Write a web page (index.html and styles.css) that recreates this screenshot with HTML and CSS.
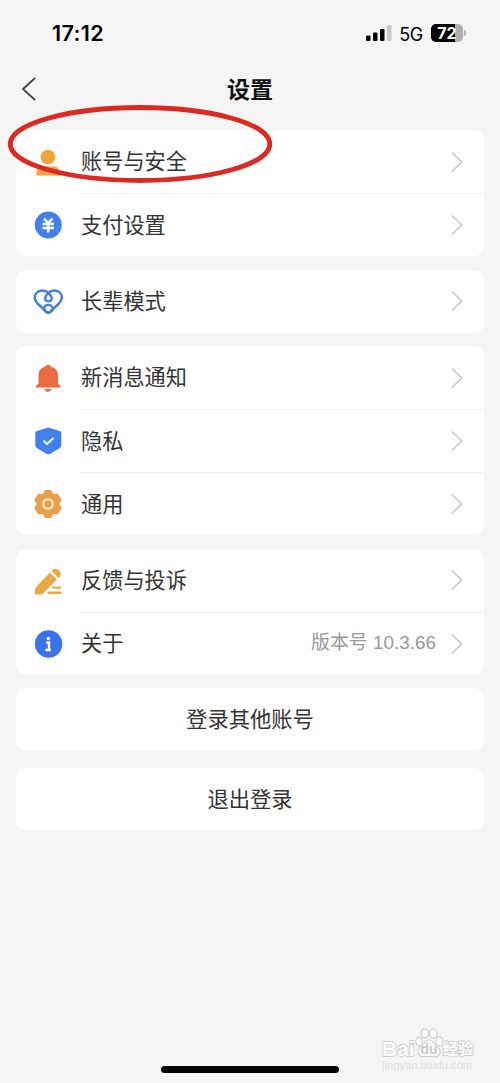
FILE: index.html
```html
<!DOCTYPE html>
<html lang="zh-CN">
<head>
    <meta charset="UTF-8">
    <meta name="viewport" content="width=device-width, initial-scale=1.0">
    <title>设置</title>
    <link rel="stylesheet" href="styles.css">
</head>
<body>

    <div class="screen">
        <!-- Status bar -->
        <div class="status-bar">
            <span class="time">17:12</span>
            <div class="status-right">
                <svg class="signal" width="26" height="16" viewBox="0 0 26 16">
                    <rect x="0" y="10.500" width="4.500" height="5.500" rx="1.300"/>
                    <rect x="7" y="7.500" width="4.500" height="8.500" rx="1.300"/>
                    <rect x="14" y="4" width="4.500" height="12" rx="1.300"/>
                    <rect x="21" y="0" width="4.500" height="16" rx="1.300" fill="#c8c8c8"/>
                </svg>
                <span class="network">5G</span>
                <div class="battery"><span>72</span></div>
                <div class="battery-tip"></div>
            </div>
        </div>

        <!-- Title -->
        <div class="header">
            <svg class="back" width="16" height="26" viewBox="0 0 16 26"><path d="M15 2L3 13L15 24"/></svg>
            <h1>设置</h1>
        </div>

        <!-- Settings -->
        <div class="card">
            <div class="row">
                <svg class="icon" viewBox="0 0 32 32"><circle cx="16" cy="11" r="7.300" fill="#eda23b"/><path d="M4.500 29.500V26Q4.500 20.500 10 20.500H22Q27.500 20.500 27.500 26V29.500Z" fill="#f7a03c"/></svg>
                <div class="row-main"><span class="label">账号与安全</span><svg class="arrow" viewBox="0 0 14 22"><path d="M2 1.500L11.500 11L2 20.500"/></svg></div>
            </div>
            <div class="row">
                <svg class="icon" viewBox="0 0 32 32"><circle cx="16.300" cy="16" r="13.500" fill="#4480e9"/><path d="M12 9.500L16.200 14L20.500 9.500M10.500 15H22M10.500 19H22M16.200 14V23.500" fill="none" stroke="#fff" stroke-width="2.500"/></svg>
                <div class="row-main"><span class="label">支付设置</span><svg class="arrow" viewBox="0 0 14 22"><path d="M2 1.500L11.500 11L2 20.500"/></svg></div>
            </div>
        </div>

        <div class="card">
            <div class="row">
                <svg class="icon" viewBox="0 0 32 32"><g fill="none" stroke="#427de0" stroke-width="2.400" stroke-linejoin="round" stroke-linecap="round"><path d="M12 23.500L5.500 17.500C2 14 2 9.500 4.500 7C8 3.500 13 4 16.300 7C19 9.500 20.500 11.500 19.500 13.500C18.500 16 14.500 16 13.300 13.500C12.300 11.500 14 9.500 16.300 7C19.500 4 25 3.500 28.200 7C30.700 9.500 30.500 14 27 17.500L20.500 23.500"/><ellipse cx="16.300" cy="22.700" rx="4.300" ry="3.800"/><path d="M12 23.500L15 26.300Q16.300 27.500 17.600 26.300L20.500 23.500"/></g></svg>
                <div class="row-main"><span class="label">长辈模式</span><svg class="arrow" viewBox="0 0 14 22"><path d="M2 1.500L11.500 11L2 20.500"/></svg></div>
            </div>
        </div>

        <div class="card">
            <div class="row">
                <svg class="icon" viewBox="0 0 32 32"><g fill="#eb6b3e"><path d="M14 3.500Q16 2 18 3.500L18.500 4.500C23.500 5.500 26 9 26 13.500V21.500L28.500 24V25.500H4V24L6.500 21.500V13.500C6.500 9 9 5.500 13.500 4.500Z"/><path d="M12.500 27H19.700Q18.500 30 16 30T12.500 27Z"/></g></svg>
                <div class="row-main"><span class="label">新消息通知</span><svg class="arrow" viewBox="0 0 14 22"><path d="M2 1.500L11.500 11L2 20.500"/></svg></div>
            </div>
            <div class="row">
                <svg class="icon" viewBox="0 0 32 32"><path d="M14.800 3Q16.300 2.200 17.800 3L27.800 5.900Q29.300 6.500 29.300 7.700V20Q29.300 22 27.800 23L18.300 28.700Q16.300 29.700 14.300 28.700L4.800 23Q3.300 22 3.300 20V7.700Q3.300 6.500 4.800 5.900Z" fill="#4480ed"/><path d="M11.500 15.500L15 19L21.500 13" fill="none" stroke="#d5fbf9" stroke-width="2.200"/></svg>
                <div class="row-main"><span class="label">隐私</span><svg class="arrow" viewBox="0 0 14 22"><path d="M2 1.500L11.500 11L2 20.500"/></svg></div>
            </div>
            <div class="row">
                <svg class="icon" viewBox="0 0 32 32"><path d="M13.500 3H18.500L20.500 7L25 6.500L28.500 11.500L26.500 16L28.500 20.500L25 25.500L20.500 25L18.500 29H13.500L11.500 25L7 25.500L3.500 20.500L5.500 16L3.500 11.500L7 6.500L11.500 7Z" fill="#e8a14b" stroke="#e8a14b" stroke-width="2" stroke-linejoin="round"/><circle cx="16" cy="16" r="4.800" fill="none" stroke="#fbe6bf" stroke-width="2.300"/></svg>
                <div class="row-main"><span class="label">通用</span><svg class="arrow" viewBox="0 0 14 22"><path d="M2 1.500L11.500 11L2 20.500"/></svg></div>
            </div>
        </div>

        <div class="card">
            <div class="row">
                <svg class="icon" viewBox="0 0 32 32"><g fill="#eba944"><path d="M18 7.500L25 14.500L11.500 28Q10 29.500 8 29.500H4Q3 29.500 3 28.500V25Q3 23 4.500 21.500Z"/><path d="M19.500 6L21 4.500Q24 2.500 27 5.500T28 11.500L26.500 13Z"/><rect x="20" y="21.500" width="9" height="2.300" rx="1"/><rect x="15.500" y="26.500" width="14" height="2.500" rx="1"/></g></svg>
                <div class="row-main"><span class="label">反馈与投诉</span><svg class="arrow" viewBox="0 0 14 22"><path d="M2 1.500L11.500 11L2 20.500"/></svg></div>
            </div>
            <div class="row">
                <svg class="icon" viewBox="0 0 32 32"><circle cx="16.600" cy="16" r="13.700" fill="#3b73ee"/><circle cx="16.300" cy="10.500" r="1.700" fill="#fff"/><path d="M14 14.500H17V21.500M13.500 22H19" fill="none" stroke="#fff" stroke-width="2.400"/></svg>
                <div class="row-main"><span class="label">关于</span><span class="version">版本号 10.3.66</span><svg class="arrow" viewBox="0 0 14 22"><path d="M2 1.500L11.500 11L2 20.500"/></svg></div>
            </div>
        </div>

        <div class="card action">登录其他账号</div>
        <div class="card action logout">退出登录</div>

        <!-- Red circle around the account row -->
        <svg class="mark" width="266" height="80" viewBox="0 0 266 80"><ellipse cx="133" cy="40" rx="129.800" ry="36.500"/></svg>

        <!-- Watermark -->
        <div class="watermark">
            <div class="wm-top">
                <span class="wm-text">Bai</span>
                <svg width="28" height="30" viewBox="0 0 28 30">
                    <g fill="#fff" stroke="#cfcfcf" stroke-width="1.200"><ellipse cx="4" cy="13.500" rx="3.300" ry="4.300"/><ellipse cx="10" cy="5.500" rx="3.700" ry="4.700"/><ellipse cx="18.500" cy="5.500" rx="3.700" ry="4.700"/><ellipse cx="24.300" cy="13.500" rx="3.300" ry="4.300"/><path d="M14 12C19 12 19 17 23 19.500C27 23 25 29 20 28.500H8C3 29 1 23 5 19.500C9 17 9 12 14 12Z"/></g>
                    <text x="14" y="26" text-anchor="middle">du</text>
                </svg>
                <span class="wm-text wm-cn">经验</span>
            </div>
            <div class="wm-url">jingyan.baidu.com</div>
        </div>

        <div class="home-bar"></div>
    </div>

</body>
</html>
```
FILE: styles.css
```css
* {
    box-sizing: border-box;
}
body {
    margin: 0;
    background-color: #f5f5f5;
    color: #333;
    font-family: "Liberation Sans", "Noto Sans CJK SC", sans-serif;
}
.screen {
    position: relative;
    width: 500px;
    height: 1083px;
    padding: 0 16px;
    overflow: hidden;
}
.status-bar {
    display: flex;
    justify-content: space-between;
    align-items: center;
    height: 66px;
    padding: 0 18px 0 36px;
    color: #000;
    font-family: Inter, sans-serif;
}
.time {
    font-size: 21.5px;
    font-weight: 600;
    letter-spacing: 0.4px;
}
.status-right {
    display: flex;
    align-items: center;
}
.network {
    margin: 2px 8px 0 7px;
    font-size: 18px;
    letter-spacing: -0.3px;
}
.battery {
    width: 32px;
    height: 18px;
    border-radius: 5px;
    background: linear-gradient(to right, #000 74%, #b0b0b0 74%);
    color: #fff;
    font-size: 16px;
    font-weight: 700;
    line-height: 18px;
    text-align: center;
}
.battery-tip {
    width: 2px;
    height: 6px;
    margin-left: 1px;
    border-radius: 0 3px 3px 0;
    background-color: #b8b8b8;
}
.header {
    display: flex;
    align-items: center;
    height: 64px;
    padding: 0 211px 18px 4px;
}
.back {
    fill: none;
    stroke: #444;
    stroke-width: 1.8;
}
.header h1 {
    flex: 1;
    margin: 0;
    padding-top: 2px;
    color: #111;
    font-size: 23px;
    font-weight: 700;
    line-height: 30px;
    text-align: right;
}
.card {
    margin-bottom: 13.5px;
    border-radius: 10px;
    background-color: #fff;
}
.row {
    display: flex;
    align-items: center;
    height: 63px;
    padding-left: 16px;
}
.icon {
    width: 32px;
    height: 32px;
    margin-top: 1px;
    margin-right: 16px;
}
.row-main {
    display: flex;
    flex: 1;
    align-items: center;
    height: 63px;
    padding-right: 20px;
}
.row + .row .row-main {
    border-top: 1px solid #eee;
}
.label {
    flex: 1;
    padding: 1px 0 0 1px;
    font-size: 21.2px;
    line-height: 30px;
}
.version {
    margin-right: 14px;
    color: #999;
    font-family: "Liberation Sans", "Noto Sans CJK SC", sans-serif;
    font-size: 18.9px;
    line-height: 24px;
    padding-bottom: 2px;
}
.arrow {
    width: 14px;
    height: 22px;
    fill: none;
    stroke: #c8c8c8;
    stroke-width: 1.6;
}
.action {
    height: 63px;
    font-size: 21.3px;
    line-height: 64px;
    text-align: center;
}
.logout {
    margin-top: 17px;
    height: 62px;
}
.mark {
    position: absolute;
    left: 7px;
    top: 104px;
    fill: none;
    stroke: #dc2a22;
    stroke-width: 4.8;
}
.watermark {
    position: absolute;
    left: 382px;
    top: 1028px;
    width: 94px;
    color: #fff;
}
.wm-top {
    display: flex;
    align-items: flex-end;
    height: 30px;
}
.wm-text {
    font-size: 21px;
    font-weight: 700;
    line-height: 19px;
    paint-order: stroke;
    -webkit-text-stroke: 1.8px #d0d0d0;
}
.wm-top text {
    fill: #c8c8c8;
    font-size: 14px;
    font-weight: 700;
}
.wm-cn {
    font-size: 15.3px;
}
.wm-url {
    color: #dedede;
    font-size: 11.2px;
    line-height: 14px;
}
.home-bar {
    position: absolute;
    left: 161px;
    bottom: 10px;
    width: 178px;
    height: 7px;
    border-radius: 4px;
    background-color: #000;
}
```
